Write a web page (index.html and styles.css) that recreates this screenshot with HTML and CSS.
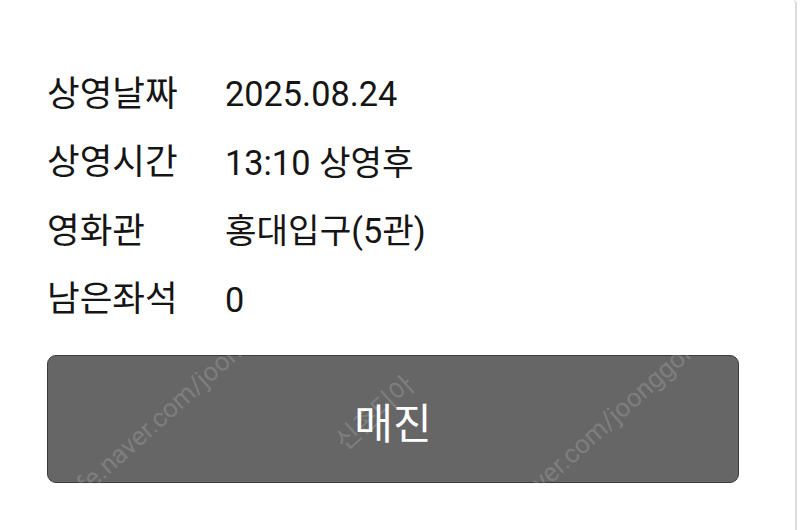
FILE: index.html
```html
<!DOCTYPE html>
<html lang="ko">
<head>
<meta charset="utf-8">
<link rel="stylesheet" href="styles.css">
</head>
<body>
<div class="page">
  <div class="info">
    <div class="row"><span class="label">상영날짜</span><span class="value">2025.08.24</span></div>
    <div class="row"><span class="label">상영시간</span><span class="value">13:10 상영후</span></div>
    <div class="row"><span class="label">영화관</span><span class="value">홍대입구(5관)</span></div>
    <div class="row"><span class="label">남은좌석</span><span class="value">0</span></div>
  </div>
  <div class="btn">매진</div>
  <div class="wm wm1">cafe.naver.com/joonggonara</div>
  <div class="wm wm2">cafe.naver.com/joonggonara</div>
  <div class="wm wm3">신촌디아</div>
</div>
</body>
</html>
```
FILE: styles.css
```css
html, body {
  margin: 0;
  padding: 0;
  background: #fff;
}
body {
  font-family: Roboto, "Noto Sans CJK KR", sans-serif;
  color: #151515;
}
.page {
  position: relative;
  width: 797px;
  height: 530px;
  border-right: 2px solid #dcdcdc;
  border-top-right-radius: 4px;
  box-sizing: border-box;
  padding: 60px 0 0 47px;
  overflow: hidden;
}
.info {
  display: flex;
  flex-direction: column;
}
.row {
  display: flex;
  align-items: center;
  height: 68.5px;
  font-size: 35.5px;
  line-height: 1;
}
.label {
  width: 178px;
}
.value {
  font-size: 34.3px;
}
.btn {
  margin-top: 21px;
  width: 692px;
  height: 128px;
  box-sizing: border-box;
  background: #666;
  border: 1px solid #3c3c3c;
  border-radius: 9px;
  color: #fff;
  font-size: 42px;
  display: flex;
  align-items: center;
  justify-content: center;
  padding-top: 3px;
}
.wm {
  position: absolute;
  font-family: Roboto, "Noto Sans CJK KR", sans-serif;
  font-size: 26px;
  color: rgba(255, 255, 255, 0.18);
  transform: rotate(-42deg);
  transform-origin: left bottom;
  white-space: nowrap;
  pointer-events: none;
}
.wm1 { left: 70px; top: 488px; }
.wm2 { left: 482px; top: 524px; }
.wm3 { left: 350px; top: 420px; }
```
